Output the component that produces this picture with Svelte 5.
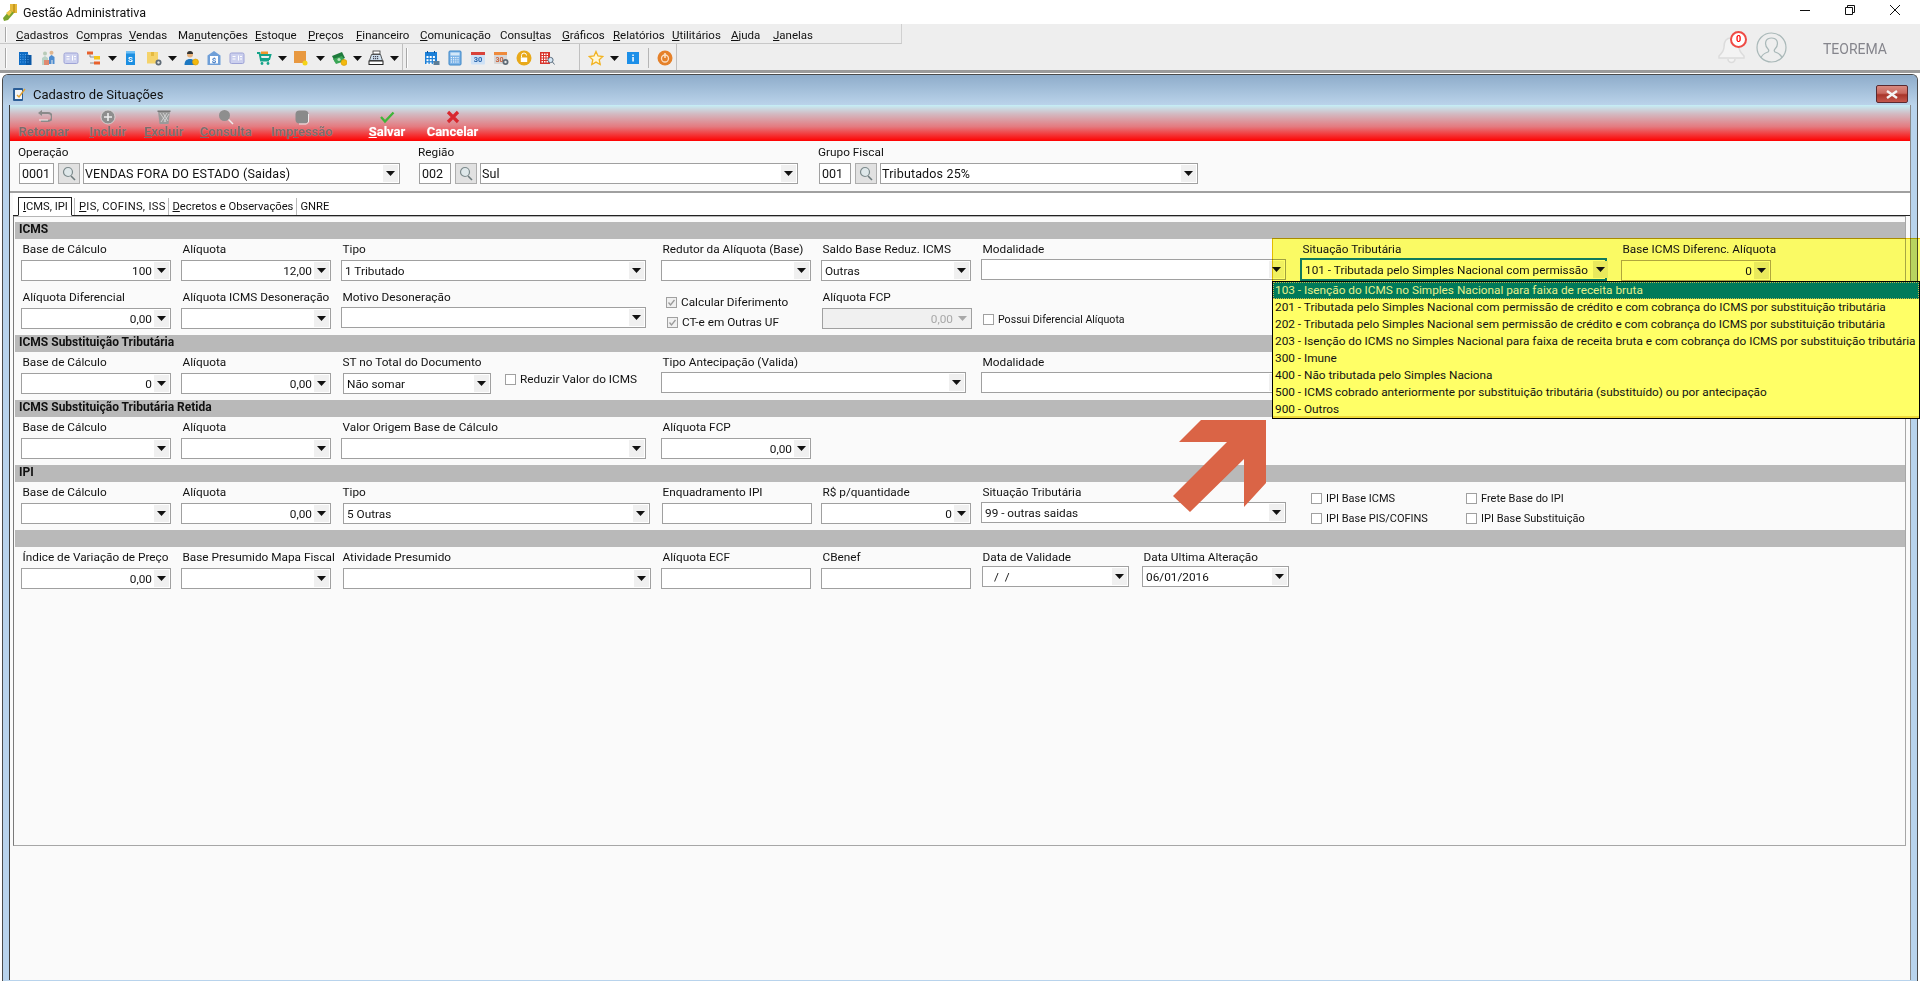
<script>
    const menus = [
        ['Cadastros', 0, 60], ['Compras', 1, 53], ['Vendas', 0, 49], ['Manutenções', 2, 77], ['Estoque', 0, 53], ['Preços', 0, 48],
        ['Financeiro', 0, 64], ['Comunicação', 0, 80], ['Consultas', 5, 62], ['Gráficos', 0, 51], ['Relatórios', 0, 59],
        ['Utilitários', 0, 59], ['Ajuda', 0, 42], ['Janelas', 0, 50]
    ];

    const gear = (x, y) => `<circle cx="${x}" cy="${y}" r="3" fill="#5f6b76"/><circle cx="${x}" cy="${y}" r="1.2" fill="#e8e8e8"/>`;
    const coin = (x, y) => `<circle cx="${x}" cy="${y}" r="3" fill="#f2b90f" stroke="#d89a00" stroke-width=".6"/>`;
    const grid = (x, y, cols, rows, c, s = 2, p = 3) => {
        let out = '';
        for (let i = 0; i < cols; i++) for (let j = 0; j < rows; j++) out += `<rect x="${x + i * p}" y="${y + j * p}" width="${s}" height="${s}" fill="${c}"/>`;
        return out;
    };
    const card = `<rect x="1" y="3" width="14" height="10.5" rx="1.5" fill="#ccd0ee" stroke="#9ea3d6"/><rect x="3.5" y="6" width="3" height="1" fill="#fff"/><rect x="3.5" y="8.5" width="3" height="1" fill="#fff"/><rect x="9" y="5.5" width="1" height="5" fill="#fff"/><rect x="11" y="6" width="2" height="1" fill="#fff"/><rect x="11" y="8.5" width="2" height="1" fill="#fff"/>`;

    const icons = {
        building: `<rect x="2" y="2" width="9" height="13" fill="#0f6cc4"/><rect x="9" y="5" width="5.5" height="10" fill="#0a58a6"/>` + grid(3, 4, 4, 4, '#59a5ec', 1, 2.5),
        people: `<circle cx="5" cy="3.5" r="2" fill="#b8cbb8"/><path d="M2 15V8l3-2 3 2v7z" fill="#b9d2c6"/><rect x="4" y="10" width="5" height="5" fill="#e08a70"/><circle cx="11.5" cy="2.8" r="2" fill="#e0b58e"/><path d="M9 14V7l2.500-2 3 2v7h-2v-4h-1v4z" fill="#4e8ccf"/>`,
        card,
        org: `<rect x="1" y="1.500" width="6" height="3" fill="#e8612c"/><rect x="8" y="6" width="6" height="3.500" fill="#f5c518"/><rect x="8" y="11.500" width="6" height="3" fill="#e8612c"/><path d="M4 4.500V7h4M4 13h4" stroke="#777" fill="none" stroke-width=".8"/>`,
        doc: `<rect x="3" y="1" width="9" height="14" fill="#1c8fe2"/><rect x="3" y="1" width="9" height="2.500" fill="#6fc0f5"/><text x="7.500" y="12" font-size="8" font-family="Roboto, sans-serif" font-weight="700" fill="#fff" text-anchor="middle">S</text>`,
        box: `<rect x="1" y="2" width="11" height="11.500" fill="#f5d36b"/><rect x="5" y="2" width="3" height="4" fill="#e5b93f"/>` + gear(12.5, 12.5),
        person: `<circle cx="7" cy="4.500" r="3" fill="#e7b27c"/><path d="M4 4a3 3 0 0 1 6 0z" fill="#333"/><path d="M1.500 15c0-4 2-6 5.500-6s5 2 5 6z" fill="#1d78c1"/>` + coin(12.5, 12),
        bank: `<path d="M1.500 5.500L8 1l6.500 4.500V15h-13z" fill="#6f9fd8"/><rect x="4" y="6" width="8" height="7.500" fill="#fff"/><text x="8" y="12.500" font-size="8" font-family="Roboto, sans-serif" font-weight="700" fill="#3c78c4" text-anchor="middle">$</text>`,
        cart: `<path d="M1 3h2.500l1.500 7.500h8M3.800 5h10.700l-1.200 4H5" fill="none" stroke="#14a389" stroke-width="1.800"/><rect x="5" y="1.500" width="7" height="2.500" fill="#f0962a"/><circle cx="6" cy="13.500" r="1.400" fill="#14a389"/><circle cx="12" cy="13.500" r="1.400" fill="#14a389"/>`,
        orange: `<rect x="1" y="1" width="12" height="12" fill="#e8983f"/><circle cx="12" cy="13" r="2.500" fill="#f5d417"/>`,
        money: `<path d="M1 6l10-4 3 6-10 4z" fill="#1f7a3c"/><path d="M2 9l9-3 3 5-9 3z" fill="#3aa656"/><circle cx="8" cy="9.500" r="1.600" fill="#b9e5bc"/>` + coin(13, 12.5),
        register: `<rect x="5" y="1" width="7" height="3" fill="#fff" stroke="#333" stroke-width=".8"/><path d="M3.500 4.500h9l2 6H1.500z" fill="#cfe0ee" stroke="#333" stroke-width=".8"/><rect x="1" y="11" width="14" height="3.500" fill="#fff" stroke="#222"/>` + grid(5, 6, 3, 2, '#445', 1.200, 2),
        calgrid: `<rect x="1" y="2" width="12" height="12" fill="#1c80d8"/>` + grid(2.500, 6, 3, 3, '#fff', 2, 3.200) + `<rect x="3" y="1" width="1" height="2" fill="#0a4f92"/><rect x="10" y="1" width="1" height="2" fill="#0a4f92"/><rect x="9.500" y="11" width="6" height="4" fill="#5b7d98"/>`,
        calc: `<rect x="2" y="1" width="12" height="14" rx="1" fill="#7db4e8" stroke="#3d86c6"/><rect x="3.500" y="2.500" width="9" height="3" fill="#d4e8f8"/>` + grid(3.800, 7, 4, 3, '#f0f7fd', 1.200, 2.200),
        cal: `<rect x="1" y="2" width="14" height="12.500" rx="1" fill="#cfe2f6"/><rect x="1" y="2" width="14" height="3" fill="#d9433a"/><text x="8" y="12.300" font-size="7.500" font-family="Roboto, sans-serif" font-weight="700" fill="#2a66ad" text-anchor="middle">30</text>`,
        calgear: `<rect x="1" y="2" width="13" height="12" rx="1" fill="#d7d7d7"/><rect x="1" y="2" width="13" height="3" fill="#ef8a3b"/><text x="6.500" y="12" font-size="7" font-family="Roboto, sans-serif" font-weight="700" fill="#c9603b" text-anchor="middle">30</text>` + gear(12.5, 12),
        lock: `<circle cx="8" cy="8" r="7.500" fill="#e8a91a"/><path d="M5.500 7.500V5.500a2.500 2.500 0 0 1 5 0" fill="none" stroke="#fff" stroke-width="1"/><rect x="4.800" y="7.500" width="6.400" height="4.500" fill="#fff"/>`,
        redb: `<rect x="1" y="2" width="10" height="12" fill="#d8342c"/>` + grid(2.500, 3.500, 3, 4, '#fff', 1.500, 2.500) + `<circle cx="11.500" cy="10" r="2.600" fill="#d5e6f5" stroke="#5a6d7d"/><path d="M13.500 12l2 2.500" stroke="#5a6d7d"/>`,
        star: `<path d="M8 1.500l2 4.500 4.800.500-3.600 3.200 1 4.800L8 12.100l-4.200 2.400 1-4.800L1.200 6.500 6 6z" fill="#fff7d8" stroke="#f2b322" stroke-width="1.300"/>`,
        info: `<rect x="2" y="2" width="12" height="12" fill="#1c8fe8"/><rect x="7.300" y="4.500" width="1.500" height="1.500" fill="#fff"/><rect x="7.300" y="7" width="1.500" height="4.500" fill="#fff"/>`,
        power: `<circle cx="8" cy="8" r="7.500" fill="#e5812a"/><circle cx="8" cy="8.500" r="3.500" fill="none" stroke="#fbe0c4" stroke-width="1.300"/><rect x="7.200" y="3" width="1.600" height="5" fill="#fbe0c4"/>`
    };

    // a = has dropdown arrow, gap = a bit more room before the icon
    const toolbar = [
        { i: 'building' }, { i: 'people' }, { i: 'card' }, { i: 'org', a: 1 }, { i: 'doc' }, { i: 'box', a: 1 },
        { i: 'person' }, { i: 'bank' }, { i: 'card' }, { i: 'cart', a: 1, gap: 1 }, { i: 'orange', a: 1 },
        { i: 'money', a: 1 }, { i: 'register', a: 1 }
    ];
    const toolbar2 = ['calgrid', 'calc', 'cal', 'calgear', 'lock', 'redb'];

    const actions = [
        { t: 'Retornar', w: 68, k: -1, icon: `<path d="M4 4h8a3 3 0 0 1 0 8H5" fill="none" stroke="#8a8a8a" stroke-width="2.200"/><path d="M6 1L2 4l4 3z" fill="#8a8a8a"/><path d="M3 11h9" stroke="#eee"/>` },
        { t: 'Incluir', w: 60, k: 0, icon: `<circle cx="8" cy="8" r="7" fill="#8e8e8e" stroke="#ddd" stroke-width=".8"/><path d="M8 4v8M4 8h8" stroke="#eee" stroke-width="1.600"/>` },
        { t: 'Excluir', w: 52, k: 0, icon: `<path d="M2 2h12l-1.500 13h-9z" fill="#9a9a9a"/><path d="M4 4l6 9M7 4l5 8M11 4l-6 9M13 5l-5 8" stroke="#e4e4e4" stroke-width=".7"/><rect x="1.500" y="1.500" width="13" height="1.500" fill="#777"/>` },
        { t: 'Consulta', w: 72, k: 0, icon: `<circle cx="6.500" cy="6.500" r="5.500" fill="#8e8e8e"/><path d="M10.500 10.500l4.500 4.500" stroke="#eee" stroke-width="1.400"/>` },
        { t: 'Impressão', w: 80, k: 3, icon: `<rect x="1.500" y="1.500" width="13" height="13" rx="4" fill="#8a8a8a"/><path d="M14.500 5v8l-2 2H5" fill="none" stroke="#eee"/>` },
        { t: 'Salvar', w: 74, k: 0, on: 1, mgn: 8, icon: `<path d="M2 8l4 4.500L14.500 3.500" fill="none" stroke="#3fb53a" stroke-width="2.300"/>` },
        { t: 'Cancelar', w: 57, k: -1, on: 1, icon: `<path d="M3 3l10 10M13 3L3 13" stroke="#d9282f" stroke-width="3.200"/>` }
    ];

    const lookups = [
        { label: 'Operação', code: '0001', text: 'VENDAS FORA DO ESTADO (Saidas)', cw: 35, tw: 317, at: 8 },
        { label: 'Região', code: '002', text: 'Sul', cw: 32, tw: 318, at: 18 },
        { label: 'Grupo Fiscal', code: '001', text: 'Tributados 25%', cw: 32, tw: 318, at: 20 }
    ];

    const num = (label, col, value = '') => ({ label, col, w: 150, value, right: true });
    const sections = [
        {
            title: 'ICMS',
            rows: [
                [num('Base de Cálculo', 1, '100'), num('Alíquota', 2, '12,00'), { label: 'Tipo', col: 3, w: 305, value: '1 Tributado' },
                 { label: 'Redutor da Alíquota (Base)', col: 4, w: 150 }, { label: 'Saldo Base Reduz. ICMS', col: 5, w: 150, value: 'Outras' },
                 { label: 'Modalidade', col: 6, w: 305, up: 1 },
                 { label: 'Situação Tributária', col: 7, w: 307, value: '101 - Tributada pelo Simples Nacional com permissão', fx: -1, up: 2, focus: true },
                 { label: 'Base ICMS Diferenc. Alíquota', col: 8, w: 150, value: '0', right: true, lifted: true }],
                [num('Alíquota Diferencial', 1, '0,00'), num('Alíquota ICMS Desoneração', 2), { label: 'Motivo Desoneração', col: 3, w: 305, up: 1 },
                 { col: 4, checks: [{ t: 'Calcular Diferimento', on: true, x: 5 }, { t: 'CT-e em Outras UF', on: true, x: 6 }], top: 2 },
                 { label: 'Alíquota FCP', col: 5, w: 150, value: '0,00', right: true, fx: 1, up: -1, disabled: true },
                 { col: 6, checks: [{ t: 'Possui Diferencial Alíquota', x: 2, tiny: true }], top: 19 }]
            ]
        },
        {
            title: 'ICMS Substituição Tributária',
            rows: [
                [num('Base de Cálculo', 1, '0'), num('Alíquota', 2, '0,00'), { label: 'ST no Total do Documento', col: 3, w: 148, value: 'Não somar', fx: 2 },
                 { col: 3, checks: [{ t: 'Reduzir Valor do ICMS', x: 164 }], top: 14 },
                 { label: 'Tipo Antecipação (Valida)', col: 4, w: 305, up: 1 }, { label: 'Modalidade', col: 6, w: 305, up: 1 }]
            ]
        },
        {
            title: 'ICMS Substituição Tributária Retida',
            rows: [
                [num('Base de Cálculo', 1), num('Alíquota', 2), { label: 'Valor Origem Base de Cálculo', col: 3, w: 305 }, num('Alíquota FCP', 4, '0,00')]
            ]
        },
        {
            title: 'IPI',
            rows: [
                [num('Base de Cálculo', 1), num('Alíquota', 2, '0,00'), { label: 'Tipo', col: 3, w: 307, value: '5 Outras', fx: 2 },
                 { label: 'Enquadramento IPI', col: 4, w: 150, fx: 1, plain: true }, num('R$ p/quantidade', 5, '0'),
                 { label: 'Situação Tributária', col: 6, w: 305, value: '99 - outras saidas', up: 1 },
                 { col: 7, checks: [{ t: 'IPI Base ICMS', x: 10, small: true }, { t: 'IPI Base PIS/COFINS', x: 10, small: true }], top: 3 },
                 { col: 7, checks: [{ t: 'Frete Base do IPI', x: 165, small: true }, { t: 'IPI Base Substituição', x: 165, small: true }], top: 3 }]
            ]
        },
        {
            title: '',
            rows: [
                [num('Índice de Variação de Preço', 1, '0,00'), num('Base Presumido Mapa Fiscal', 2), { label: 'Atividade Presumido', col: 3, w: 308, fx: 2 },
                 { label: 'Alíquota ECF', col: 4, w: 150, plain: true }, { label: 'CBenef', col: 5, w: 150, plain: true },
                 { label: 'Data de Validade', col: 6, w: 147, value: ' /  /', up: 2, fx: 1, pad: 8 },
                 { label: 'Data Ultima Alteração', col: 6, x: 161, w: 147, value: '06/01/2016', up: 2 }]
            ]
        }
    ];

    const options = [
        '103 - Isenção do ICMS no Simples Nacional para faixa de receita bruta',
        '201 - Tributada pelo Simples Nacional com permissão de crédito e com cobrança do ICMS por substituição tributária',
        '202 - Tributada pelo Simples Nacional sem permissão de crédito e com cobrança do ICMS por substituição tributária',
        '203 - Isenção do ICMS no Simples Nacional para faixa de receita bruta e com cobrança do ICMS por substituição tributária',
        '300 - Imune',
        '400 - Não tributada pelo Simples Naciona',
        '500 - ICMS cobrado anteriormente por substituição tributária (substituído) ou por antecipação',
        '900 - Outros'
    ];
</script>

{#snippet caret()}
    <svg class="caret" width="9" height="5" viewBox="0 0 9 5"><path d="M0 0h9L4.500 5z" /></svg>
{/snippet}

{#snippet magnifier()}
    <svg width="14" height="15" viewBox="0 0 14 15">
        <circle cx="6" cy="6" r="4.500" fill="#dfe8ea" stroke="#7c8a8c" stroke-width="1.200" />
        <path d="M9 10l4 4" stroke="#6d7a7c" stroke-width="1.600" />
    </svg>
{/snippet}

<div class="screen">
    <header class="titlebar">
        <svg class="app-logo" width="17" height="18" viewBox="0 0 17 18">
            <path d="M8 1h7v9H8z" fill="#e5b93c" />
            <path d="M11 1h2v9h-2z" fill="#c99b1e" />
            <path d="M1 15l7-8 4 3-6 7-4 1z" fill="#7aa32c" />
            <path d="M4 10l4-3 2 2-3 4z" fill="#f0c94a" />
        </svg>
        <span class="app-name">Gestão Administrativa</span>
        <div class="win-controls">
            <svg width="10" height="10" viewBox="0 0 10 10"><path d="M0 5.500h10" stroke="#111" /></svg>
            <svg width="10" height="10" viewBox="0 0 10 10"><path d="M.5 2.500h7v7h-7zM2.500 2.500v-2h7v7h-2" fill="none" stroke="#111" /></svg>
            <svg width="10" height="10" viewBox="0 0 10 10"><path d="M0 0l10 10M10 0L0 10" stroke="#111" /></svg>
        </div>
    </header>

    <div class="chrome">
        <div class="chrome-left">
            <nav class="menubar">
                <span class="grip menu-grip"></span>
                {#each menus as [name, key, w]}
                    <span class="menu" style:width="{w}px">{name.slice(0, key)}<u>{name[key]}</u>{name.slice(key + 1)}</span>
                {/each}
            </nav>
            <div class="toolbar">
                <div class="tb-group first">
                    <span class="grip"></span>
                    {#each toolbar as t}
                        <svg class="tb-icon" class:gap={t.gap} width="16" height="16" viewBox="0 0 16 16">{@html icons[t.i]}</svg>
                        {#if t.a}<span class="tb-arrow">{@render caret()}</span>{/if}
                    {/each}
                </div>
                <div class="tb-group second">
                    <span class="grip"></span>
                    {#each toolbar2 as i}
                        <svg class="tb-icon" width="16" height="16" viewBox="0 0 16 16">{@html icons[i]}</svg>
                    {/each}
                </div>
                <div class="tb-group third">
                    <svg class="tb-icon" width="16" height="16" viewBox="0 0 16 16">{@html icons.star}</svg>
                    <span class="tb-arrow">{@render caret()}</span>
                    <svg class="tb-icon" width="16" height="16" viewBox="0 0 16 16">{@html icons.info}</svg>
                    <span class="tb-div"></span>
                    <svg class="tb-icon" width="16" height="16" viewBox="0 0 16 16">{@html icons.power}</svg>
                </div>
            </div>
        </div>
        <div class="user">
            <div class="bell">
                <svg width="29" height="33" viewBox="0 0 29 33">
                    <path d="M14 6c-5 0-7 4-7 9 0 4-2 6-5 9v2h25v-2c-3-3-5-5-5-9 0-5-3-9-8-9zM11 27a3.500 3.500 0 0 0 7 0" fill="#f3f3f3" stroke="#dcdcdc" stroke-width="1.500" />
                </svg>
                <span class="badge">0</span>
            </div>
            <svg class="avatar" width="31" height="31" viewBox="0 0 31 31">
                <circle cx="15.500" cy="15.500" r="14.500" fill="none" stroke="#a9b8b8" stroke-width="1.200" />
                <path d="M5 26c1-4 4-5 7-6 1-1 1-2 0-3-2-2-3-5-2-8 1-2 3-3 5.500-3s4.500 1 5.500 3c1 3 0 6-2 8-1 1-1 2 0 3 3 1 6 2 7 6" fill="none" stroke="#a9b8b8" stroke-width="1.200" />
            </svg>
            <span class="user-name">TEOREMA</span>
        </div>
    </div>

    <div class="strip"></div>

    <div class="window">
        <div class="win-title">
            <svg width="16" height="16" viewBox="0 0 16 16">
                <rect x="1" y="2" width="10" height="13" rx="1" fill="#2a5d96" />
                <rect x="3" y="4" width="7" height="9" fill="#f3f5f8" />
                <path d="M5 9l2 2 6-8" fill="none" stroke="#e0a030" stroke-width="1.400" />
            </svg>
            <span>Cadastro de Situações</span>
            <button class="win-close" aria-label="Fechar">
                <svg width="14" height="9" viewBox="0 0 14 9"><path d="M2 1l10 7M12 1L2 8" stroke="#f4f4f4" stroke-width="2.400" /></svg>
            </button>
        </div>

        <div class="win-body">
            <div class="actions">
                {#each actions as a}
                    <div class="action" class:on={a.on} style:width="{a.w}px" style:margin-left="{a.mgn || 0}px">
                        <svg width="16" height="16" viewBox="0 0 16 16">{@html a.icon}</svg>
                        <span>{#if a.k >= 0}{a.t.slice(0, a.k)}<u>{a.t[a.k]}</u>{a.t.slice(a.k + 1)}{:else}{a.t}{/if}</span>
                    </div>
                {/each}
            </div>

            <div class="lookups">
                {#each lookups as l}
                    <div class="lookup" style:margin-left="{l.at}px">
                        <label>{l.label}</label>
                        <div class="lookup-row">
                            <div class="field code" style:width="{l.cw}px">{l.code}</div>
                            <button class="search" aria-label="Buscar">{@render magnifier()}</button>
                            <div class="field" style:width="{l.tw}px">
                                <span class="val big">{l.text}</span>
                                <span class="btn">{@render caret()}</span>
                            </div>
                        </div>
                    </div>
                {/each}
            </div>

            <div class="tabs">
                <span class="tab active"><u>I</u>CMS, IPI</span>
                <span class="tab tab2"><u>P</u>IS, COFINS, ISS</span>
                <span class="tab tab3"><u>D</u>ecretos e Observações</span>
                <span class="tab tab4">GNRE</span>
            </div>

            <div class="panel">
                {#each sections as s}
                    <div class="bar">{s.title}</div>
                    {#each s.rows as row}
                        <div class="row">
                            {#each row as c}
                                {#if c.checks}
                                    <div class="checks" style:grid-column={c.col} style:margin-top="{c.top}px">
                                        {#each c.checks as k}
                                            <div class="check" class:small={k.small} class:tiny={k.tiny} style:margin-left="{k.x}px">
                                                <span class="box" class:on={k.on}>
                                                    {#if k.on}<svg width="9" height="9" viewBox="0 0 9 9"><path d="M1.500 4.500l2 2.500 4-5" fill="none" stroke="#9a9a9a" stroke-width="1.300" /></svg>{/if}
                                                </span>
                                                {k.t}
                                            </div>
                                        {/each}
                                    </div>
                                {:else}
                                    <div class="cell" class:lifted={c.focus || c.lifted} style:grid-column={c.col} style:margin-left="{c.x || 0}px">
                                        <label>{c.label}</label>
                                        <div
                                            class="field"
                                            class:focus={c.focus}
                                            class:onyellow={c.lifted}
                                            class:disabled={c.disabled}
                                            style:width="{c.w}px"
                                            style:margin-left="{c.fx || 0}px"
                                            style:margin-top="{-(c.up || 0)}px"
                                        >
                                            <span class="val" class:right={c.right} style:padding-left="{c.pad || 3}px">{c.value || ''}</span>
                                            {#if !c.plain}<span class="btn">{@render caret()}</span>{/if}
                                        </div>
                                    </div>
                                {/if}
                            {/each}
                        </div>
                    {/each}
                {/each}
            </div>
        </div>
    </div>

    <div class="highlight"></div>

    <ul class="dropdown">
        {#each options as o, i}
            <li class:sel={i === 0}>{o}</li>
        {/each}
    </ul>

    <svg class="pointer" width="93" height="92" viewBox="0 0 93 92">
        <polygon points="28,0 93,0 93,63 71,87 71,39 17,92 0,76 54,22 6,22" fill="#da6446" />
    </svg>
</div>

<style>
    :global(body) {
        margin: 0;
        background: #fff;
    }

    .screen {
        position: relative;
        width: 1920px;
        height: 981px;
        overflow: hidden;
        background: #fff;
        font-family: Roboto, "Liberation Sans", sans-serif;
        font-size: 11.800px;
        color: #111;
    }

    label {
        display: block;
    }

    .titlebar {
        display: flex;
        align-items: center;
        height: 24px;
    }

    .app-logo {
        margin-left: 2px;
    }

    .app-name {
        margin-left: 4px;
        font-size: 12.500px;
    }

    .win-controls {
        display: flex;
        gap: 35px;
        margin-left: auto;
        margin-right: 20px;
        margin-top: -4px;
    }

    .chrome {
        display: flex;
        height: 46px;
        background: #eee;
    }

    .chrome-left {
        width: 902px;
    }

    .menubar {
        display: flex;
        align-items: center;
        box-sizing: border-box;
        height: 20px;
        padding: 2px 0 0 5px;
        border-bottom: 1px solid #c8c8c8;
        border-right: 1px solid #d0d0d0;
        font-size: 11.500px;
    }

    .grip {
        flex: none;
        width: 2px;
        height: 20px;
        border-left: 1px solid #a8a8a8;
        border-right: 1px solid #fff;
        box-sizing: border-box;
    }

    .menu-grip {
        height: 15px;
        margin-right: 9px;
    }

    .menu {
        white-space: nowrap;
    }

    .toolbar {
        display: flex;
        align-items: center;
        height: 26px;
    }

    .tb-group {
        display: flex;
        align-items: center;
        box-sizing: border-box;
        height: 26px;
        padding-top: 2px;
        border-right: 1px solid #c0c0c0;
    }

    .tb-group.first {
        width: 403px;
        padding-left: 5px;
    }

    .tb-group.first .grip {
        margin-right: 6px;
    }

    .tb-group.second {
        width: 177px;
        padding-left: 3px;
    }

    .tb-group.second .grip {
        margin-right: 12px;
    }

    .tb-group.third {
        width: 97px;
        padding-left: 4px;
    }

    .tb-icon {
        flex: none;
        margin: 0 3.500px;
    }

    .tb-icon.gap {
        margin-left: 7.500px;
    }

    .tb-arrow {
        display: flex;
        justify-content: center;
        width: 15px;
    }

    .tb-div {
        width: 1px;
        height: 20px;
        margin: 0 4px 0 4px;
        background: #b5b5b5;
    }

    .caret {
        display: block;
        fill: #111;
    }

    .user {
        display: flex;
        align-items: center;
        flex: 1;
        padding-left: 815px;
    }

    .bell {
        position: relative;
        width: 29px;
        height: 33px;
        margin-top: 3px;
    }

    .badge {
        position: absolute;
        top: -1px;
        left: 13px;
        width: 13px;
        height: 13px;
        border: 2px solid #ee4b45;
        border-radius: 50%;
        background: #fff;
        color: #f00;
        font-size: 9px;
        font-weight: 700;
        line-height: 13px;
        text-align: center;
    }

    .avatar {
        margin-left: 10px;
    }

    .user-name {
        margin-left: 36px;
        font-size: 14px;
        color: #85858c;
        margin-top: 3px;
    }

    .strip {
        height: 4px;
        background: linear-gradient(#9b9b9b 75%, #fff 75%);
    }

    .window {
        box-sizing: border-box;
        height: 907px;
        margin: 0 2px;
        border: 1px solid #4a4a4a;
        border-bottom: 0;
        border-radius: 6px 6px 0 0;
        background: #b8d3ec;
    }

    .win-title {
        display: flex;
        align-items: center;
        box-sizing: border-box;
        height: 30px;
        padding: 8px 0 0 9px;
        border-radius: 5px 5px 0 0;
        background: linear-gradient(#8eacca, #bad3ea);
        font-size: 13px;
    }

    .win-title span {
        margin-left: 5px;
    }

    .win-close {
        display: flex;
        align-items: center;
        justify-content: center;
        width: 32px;
        height: 18px;
        margin-left: auto;
        margin-right: 9px;
        padding: 0;
        border: 1px solid #5a2a30;
        border-radius: 2px;
        background: linear-gradient(#d98a80 0, #c9685e 45%, #a8352a 55%, #c4574c 100%);
    }

    .win-body {
        display: flex;
        flex-direction: column;
        height: 875px;
        margin-left: 7px;
        margin-right: 7px;
        background: #fafafa;
        box-shadow: -1px 0 #3d3d3d, 1px 0 #8a8a8a;
    }

    .actions {
        display: flex;
        height: 36px;
        background: linear-gradient(#c5eff7 0, #d3b9c1 25%, #e47b80 60%, #ff0000 100%);
    }

    .action {
        display: flex;
        flex-direction: column;
        align-items: center;
        padding-top: 4px;
        box-sizing: border-box;
        font-size: 13px;
        font-weight: 700;
        color: #7c6a6a;
        text-shadow: 0 0 1px rgba(255, 255, 255, .5);
        white-space: nowrap;
    }

    .action span {
        line-height: 14px;
    }

    .action.on {
        color: #fff;
    }

    .lookups {
        display: flex;
        box-sizing: border-box;
        height: 52px;
        padding-top: 4px;
        border-bottom: 2px solid #a0a0a0;
    }

    .lookup label {
        height: 14px;
        line-height: 14px;
        margin-bottom: 4px;
    }

    .lookup-row {
        display: flex;
        gap: 3.500px;
        margin-left: 1px;
    }

    .field {
        box-sizing: border-box;
        display: flex;
        align-items: center;
        height: 21px;
        border: 1px solid #a0a0a0;
        background: #fff;
        flex: none;
    }

    .field.code {
        padding-left: 2px;
        font-size: 12.500px;
    }

    .search {
        width: 22px;
        height: 21px;
        padding: 0;
        display: flex;
        align-items: center;
        justify-content: center;
        box-sizing: border-box;
        border: 1px solid #adadad;
        background: #e1e1e1;
    }

    .val {
        flex: 1;
        min-width: 0;
        padding: 0 2px 0 3px;
        overflow: hidden;
        white-space: pre;
    }

    .val.big {
        padding-left: 1px;
        font-size: 12.500px;
        letter-spacing: .15px;
    }

    .val.right {
        text-align: right;
    }

    .btn {
        display: flex;
        align-items: center;
        justify-content: center;
        flex: none;
        width: 15px;
        height: 17px;
        margin-right: 1px;
        background: #f0f0f0;
    }

    .field.disabled {
        background: #f0f0f0;
        color: #a8a8a8;
    }

    .field.disabled .caret {
        fill: #a8a8a8;
    }

    .field.onyellow {
        background: #ffff66;
        border-color: #b0a63c;
    }

    .field.onyellow .btn,
    .field.focus .btn {
        background: #e9e95c;
    }

    .field.focus {
        height: 23px;
        border: 2px solid #0f7a5c;
        background: #ffff66;
    }

    .field.focus .val {
        flex: none;
        width: 286px;
    }

    .tabs {
        display: flex;
        align-items: flex-end;
        box-sizing: border-box;
        height: 23px;
        margin-left: 3px;
        padding-left: 5px;
        border-bottom: 1px solid #222;
        background: #fff;
        font-size: 11.200px;
    }

    .tab {
        box-sizing: border-box;
        height: 17px;
        line-height: 17px;
        white-space: nowrap;
    }

    .tab.active {
        width: 54px;
        height: 19px;
        padding-left: 4px;
        margin-bottom: -1px;
        border: 1px solid #222;
        border-bottom: 1px solid #fff;
        background: #fff;
    }

    .tab2 {
        width: 93.500px;
        margin-left: 2px;
        padding-left: 4px;
        border-left: 1px solid #bbb;
        letter-spacing: .3px;
    }

    .tab3 {
        width: 128px;
        padding-left: 4px;
        border-left: 1px solid #bbb;
    }

    .tab4 {
        padding-left: 4px;
        border-left: 1px solid #bbb;
    }

    .panel {
        box-sizing: border-box;
        height: 630px;
        margin: 0 4px 0 3px;
        padding: 6px 0 0 1px;
        border-left: 1px solid #7a7a7a;
        border-right: 1px solid #a6a6a6;
        border-bottom: 1px solid #a6a6a6;
        box-shadow: inset 0 4px 0 -3px #b5b5b5;
    }

    .bar {
        box-sizing: border-box;
        height: 17px;
        padding-left: 4px;
        background: #b9b9b9;
        font-size: 12px;
        font-weight: 700;
        line-height: 15px;
    }

    .row {
        display: grid;
        grid-template-columns: 160px 160px 320px 160px 160px 320px 320px 160px;
        align-items: start;
        padding: 3px 0 6px 6px;
    }

    .cell {
        grid-row: 1;
        min-width: 0;
    }

    .cell label {
        height: 14px;
        line-height: 14px;
        margin-bottom: 4px;
        padding-left: 1.500px;
        white-space: nowrap;
    }

    .cell.lifted {
        position: relative;
        z-index: 3;
    }

    .checks {
        grid-row: 1;
        margin-bottom: -6px;
    }

    .check {
        display: flex;
        align-items: center;
        gap: 4px;
        height: 20px;
        white-space: nowrap;
    }

    .check.small {
        font-size: 11px;
    }

    .check.tiny {
        font-size: 10.600px;
    }

    .box {
        display: flex;
        align-items: center;
        justify-content: center;
        box-sizing: border-box;
        width: 11px;
        height: 11px;
        border: 1px solid #a0a0a0;
        background: #fff;
    }

    .box.on {
        background: #f0f0f0;
    }

    /* overlays: annotations drawn on top of the captured form */
    .highlight {
        position: absolute;
        left: 1272px;
        top: 238px;
        width: 648px;
        height: 44px;
        box-sizing: border-box;
        border: 1px solid #e8c000;
        border-right: 0;
        background: #ffff66;
        mix-blend-mode: multiply;
        z-index: 2;
    }

    .dropdown {
        position: absolute;
        left: 1272px;
        top: 281px;
        width: 648px;
        height: 138px;
        box-sizing: border-box;
        margin: 0;
        padding: 0 0 1px;
        list-style: none;
        border: 1px solid #000;
        background: #ffff66;
        box-shadow: inset 0 -2px #efd93a;
        z-index: 4;
    }

    .dropdown li {
        height: 17px;
        line-height: 17px;
        padding-left: 2px;
        white-space: nowrap;
    }

    .dropdown li.sel {
        box-sizing: border-box;
        outline: 1px dotted #c9b84a;
        outline-offset: -1px;
        background: #007a5a;
        color: #e8f08a;
    }

    .pointer {
        position: absolute;
        left: 1173px;
        top: 420px;
        z-index: 5;
    }
</style>
